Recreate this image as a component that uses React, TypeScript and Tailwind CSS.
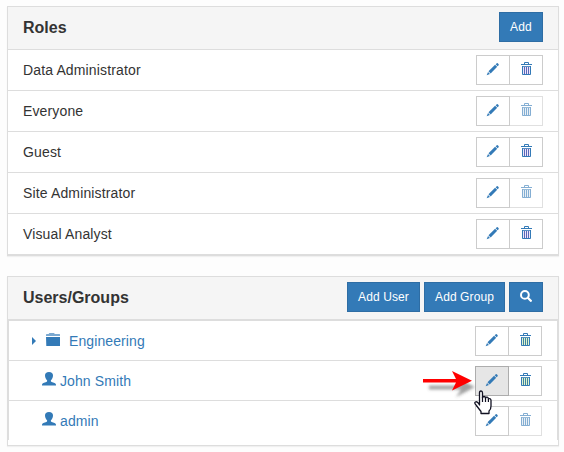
import React from "react";

function Pencil() {
  return (
    <svg width="14" height="14" viewBox="0.3 -0.8 14.5 14.5" fill="#337ab7" className="block">
      <path d="M10.3 1.6 L11.5 0.5 Q12 .1 12.5 .6 L13.4 1.5 Q13.8 2 13.4 2.5 L12.3 3.6 Z" />
      <path d="M9.7 2 L11.9 4.2 L5.1 11 L2.9 8.8 Z" />
      <path d="M2.4 9.6 L4.4 11.6 L1 13 Z" />
    </svg>
  );
}

const tints = {
  violet: { fill: "#eee6fa", bar: "#5a68b8" },
  green: { fill: "#e0f5d0", bar: "#3f84a0" },
  muted: { fill: "#dbe7f1", bar: "#337ab7" },
};

function Trash({ tint }: { tint: keyof typeof tints }) {
  return (
    <svg width="11" height="13" viewBox="0 0 11 13" fill="none" stroke="#337ab7" className="block">
      <path d="M1 4h9v9H1Z" stroke="none" fill={tints[tint].fill} />
      <path d="M3.5 2V.5h4V2" />
      <path d="M0 2.5h11" />
      <path d="M1.5 4v8.5h8V4" />
      <path d="M1 4.5h9" strokeOpacity=".8" />
      <path d="M3.5 5v7M5.5 5v7M7.5 5v7" stroke={tints[tint].bar} />
    </svg>
  );
}

function User() {
  return (
    <svg width="14" height="14" viewBox="0 0 14 14" fill="#337ab7" className="mt-px block">
      <path d="M7 0C9.6 0 11 1.4 11 3.6C11 5.8 10 7.4 8.9 8.3V9.2C9 9.7 9.4 9.9 10.4 10.3C12.7 11.2 14 11.5 14 12.8V13.6H0V12.8C0 11.5 1.3 11.2 3.6 10.3C4.6 9.9 5 9.7 5.1 9.2V8.3C4 7.4 3 5.8 3 3.6C3 1.4 4.4 0 7 0Z" />
    </svg>
  );
}

function Folder() {
  return (
    <svg width="15" height="13" viewBox="0 0 15 13" className="block">
      <path d="M0 3V1.7Q0 1 .8 1H2.6L3.4 0H8L8.8 1H13.5Q14 1 14 1.7V3Z" fill="#337ab7" fillOpacity=".65" />
      <path d="M0 4h14v9H.3Z" fill="#337ab7" />
    </svg>
  );
}

function Search() {
  return (
    <svg width="12" height="12" viewBox="0 0 12 12" fill="none" stroke="white" className="-mt-0.5 block">
      <circle cx="4.9" cy="4.9" r="3.9" strokeWidth="2" />
      <path d="M7.8 7.8l3 3" strokeWidth="2.3" strokeLinecap="round" />
    </svg>
  );
}

function Actions({ muted, active, green }: { muted?: boolean; active?: boolean; green?: boolean }) {
  return (
    <div className="flex">
      <button
        className={`relative z-10 flex h-[30px] w-[34px] justify-center border pt-[6px] ${
          active ? "border-[#adadad] bg-[#e6e6e6]" : "border-[#ccc] bg-white"
        }`}
      >
        <Pencil />
      </button>
      <button
        className={`-ml-px flex h-[30px] w-[34px] border border-[#ccc] bg-white pl-[11px] pt-[6px] ${
          muted ? "opacity-60" : ""
        }`}
      >
        <Trash tint={muted ? "muted" : green ? "green" : "violet"} />
      </button>
    </div>
  );
}

function Primary({ className, children }: { className: string; children: React.ReactNode }) {
  return (
    <button
      className={`flex h-[30px] items-center justify-center border border-[#2e6da4] bg-[#337ab7] text-[12px] leading-[18px] text-white ${className}`}
    >
      {children}
    </button>
  );
}

const roles = [
  { name: "Data Administrator" },
  { name: "Everyone", muted: true },
  { name: "Guest" },
  { name: "Site Administrator", muted: true },
  { name: "Visual Analyst" },
];

const heading = "text-[16px] font-bold leading-[18px] text-[#333]";

export default function App() {
  return (
    <div className="h-[452px] w-[564px] overflow-hidden bg-[#fdfdfd] pl-[7px] pt-[6px] font-['Liberation_Sans',Arial,sans-serif] text-[14px] leading-5 text-[#333]">
      <section className="w-[552px] border border-[#ddd] bg-white shadow-[0_1px_1px_rgba(0,0,0,0.05)]">
        <header className="flex h-[42px] items-start justify-between bg-[#f5f5f5] px-[15px] pt-[5px]">
          <h3 className={`${heading} pt-[7px]`}>Roles</h3>
          <Primary className="w-[44px] tracking-[0.15px]">Add</Primary>
        </header>
        <ul className="border-b border-[#ddd]">
          {roles.map((r) => (
            <li key={r.name} className="flex h-[41px] items-start justify-between border-t border-[#ddd] px-[15px] pt-[5px]">
              <span className="pt-[5px] tracking-[0.14px]">{r.name}</span>
              <Actions muted={r.muted} />
            </li>
          ))}
        </ul>
      </section>

      <section className="mt-5 h-[170px] w-[552px] border border-[#ddd] bg-white shadow-[0_1px_1px_rgba(0,0,0,0.05)]">
        <header className="flex h-[43px] items-start justify-between border-b border-[#ddd] bg-[#f5f5f5] px-[15px] pt-[5px]">
          <h3 className={`${heading} pt-[7px]`}>Users/Groups</h3>
          <div className="flex gap-1">
            <Primary className="w-[73px] tracking-[0.1px]">Add User</Primary>
            <Primary className="w-[81px] tracking-[0.1px]">Add Group</Primary>
            <Primary className="w-[34px]">
              <Search />
            </Primary>
          </div>
        </header>
        <ul className="border-x border-[#ddd] tracking-[0.1px] text-[#337ab7]">
          <li className="flex h-10 items-start justify-between border-t border-[#ddd] pl-[23px] pr-[15px] pt-[5px]">
            <div className="flex pt-[5px]">
              <svg width="4" height="8" viewBox="0 0 4 8" className="mt-[6px]">
                <path d="M0 0L4 4L0 8Z" fill="#337ab7" />
              </svg>
              <span className="ml-[10px] mt-[2px]">
                <Folder />
              </span>
              <span className="ml-[8px]">Engineering</span>
            </div>
            <Actions green />
          </li>
          <li className="relative flex h-10 items-start justify-between border-t border-[#ddd] pl-[33px] pr-[15px] pt-[5px]">
            <div className="flex gap-[4px] pt-[5px]">
              <User />
              <span>John Smith</span>
            </div>
            <Actions active green />
            <svg width="58" height="34" viewBox="0 0 58 34" className="absolute left-[413px] top-[9px]">
              <defs>
                <filter id="soft" x="-20%" y="-20%" width="140%" height="150%">
                  <feGaussianBlur stdDeviation="1.5" />
                </filter>
              </defs>
              <path
                d="M3 10.5H35L30 2.5L49 12L30 22L35 14.5H3Z"
                transform="translate(4 5)"
                fill="#444"
                fillOpacity=".5"
                filter="url(#soft)"
              />
              <path d="M1 9H34L30 1L50 10.8L30 20.6L34 12.6H1Z" fill="#f00" />
            </svg>
            <svg width="19" height="25" viewBox="0 0 19 25" className="absolute left-[465px] top-[29px] z-20">
              <path
                d="M5.5 15V3Q5.5 1 7 1Q8.5 1 8.5 3V8Q8.7 6.5 10 6.5Q11.4 6.5 11.5 8.2Q12 7 13.2 7.2Q14.3 7.4 14.4 9Q15.2 8.2 16.2 8.8Q17 9.3 17 10.5V16Q17 19.5 15 21V23.5H7V21.5L2 15Q0 12.8 1.4 12Q2.8 11.2 4.2 13Z"
                fill="white"
                stroke="#111122"
                strokeWidth="1.3"
                strokeLinejoin="round"
              />
              <path d="M8.5 7V12M11.5 8V12M14.4 9V12" stroke="#111122" strokeWidth="1.2" />
            </svg>
          </li>
          <li className="flex h-10 items-start justify-between border-t border-[#ddd] pl-[33px] pr-[15px] pt-[5px]">
            <div className="flex gap-[4px] pt-[5px]">
              <User />
              <span>admin</span>
            </div>
            <Actions muted green />
          </li>
        </ul>
      </section>
    </div>
  );
}
